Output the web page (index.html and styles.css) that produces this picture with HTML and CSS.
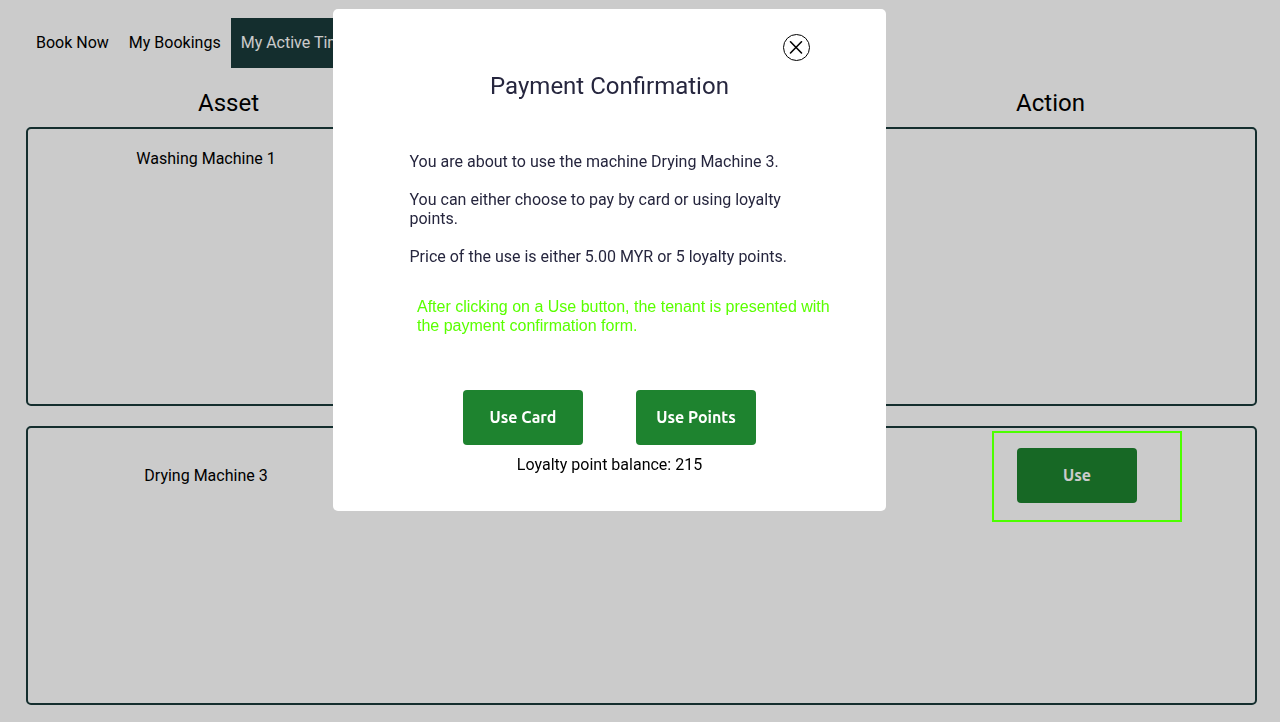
FILE: index.html
```html
<!DOCTYPE html>
<html lang="en">
<head>
  <meta charset="utf-8">
  <meta name="viewport" content="width=device-width, initial-scale=1">
  <title>Payment Confirmation</title>
  <link rel="stylesheet" href="styles.css">
</head>
<body>
  <div class="page">
    <nav class="tabs">
      <a class="tab" href="#book">Book Now</a>
      <a class="tab" href="#bookings">My Bookings</a>
      <a class="tab tab-active" href="#active">My Active Times</a>
    </nav>
    <div class="headings">
      <div>Asset</div>
      <div></div>
      <div>Action</div>
    </div>
    <main class="assets">
      <section class="asset">
        <div class="asset-name">Washing Machine 1</div>
      </section>
      <section class="asset">
        <div class="asset-name asset-name-tall">Drying Machine 3</div>
        <div></div>
        <div class="asset-action">
          <button class="button" type="button">Use</button>
          <span class="highlight"></span>
        </div>
      </section>
    </main>
  </div>

  <div class="overlay">
    <div class="modal" role="dialog" aria-modal="true" aria-labelledby="modal-title">
      <button class="close" type="button" aria-label="Close">
        <svg width="27" height="27" viewBox="0 0 27 27" fill="none" stroke="#000">
          <circle cx="13.5" cy="13.5" r="13"/>
          <path d="M7.5 7.8L18.5 19M18.5 7.8L7.5 19" stroke-width="1.6" stroke-linecap="round"/>
        </svg>
      </button>
      <h1 class="title" id="modal-title">Payment Confirmation</h1>
      <div class="message">
        <p>You are about to use the machine Drying Machine 3.</p>
        <p>You can either choose to pay by card or using loyalty points.</p>
        <p>Price of the use is either 5.00 MYR or 5 loyalty points.</p>
      </div>
      <p class="note">After clicking on a Use button, the tenant is presented with the payment confirmation form.</p>
      <div class="choices">
        <button class="button" type="button">Use Card</button>
        <button class="button" type="button">Use Points</button>
      </div>
      <p class="balance">Loyalty point balance: 215</p>
    </div>
  </div>
</body>
</html>
```

FILE: styles.css
```css
* {
  box-sizing: border-box;
}

body {
  margin: 0;
  background: #fff;
  color: #000;
  font: 16px/19px Roboto, sans-serif;
}

p,
h1 {
  margin: 0;
}

.page {
  display: flex;
  flex-direction: column;
  min-height: 100vh;
  padding: 18px 23px 17px 26px;
}

.tabs {
  display: flex;
}

.tab {
  padding: 0 10px;
  line-height: 50px;
  color: #000;
  text-decoration: none;
}

.tab-active {
  background: #1a3a3a;
  color: #fff;
}

.headings {
  display: grid;
  grid-template-columns: repeat(3, 1fr);
  margin: 21px 1px 10px -3px;
  font-size: 24px;
  line-height: 28px;
  text-align: center;
}

.assets {
  flex: 1;
  display: grid;
  grid-auto-rows: 1fr;
  gap: 20px;
}

.asset {
  display: grid;
  grid-template-columns: 356px 1fr 356px;
  align-items: start;
  padding-top: 20px;
  border: 2px solid #1a3a3a;
  border-radius: 5px;
}

.asset-name {
  text-align: center;
}

.asset-name-tall {
  line-height: 55px;
}

.asset-action {
  position: relative;
  display: flex;
  justify-content: center;
}

.highlight {
  position: absolute;
  top: -17px;
  left: 93px;
  z-index: 2;
  width: 190px;
  height: 91px;
  border: 2px solid #4cff00;
  pointer-events: none;
}

.button {
  width: 120px;
  height: 55px;
  padding: 0;
  border: 0;
  border-radius: 4px;
  background: #1e832f;
  color: #fff;
  font: 600 16px/19px Ubuntu, "Noto Sans", sans-serif;
  cursor: pointer;
}

.overlay {
  position: fixed;
  inset: 0;
  z-index: 1;
  display: flex;
  justify-content: center;
  align-items: flex-start;
  padding: 9px 61px 9px 0;
  background: rgba(0, 0, 0, 0.204);
}

.modal {
  display: flex;
  flex-direction: column;
  align-items: center;
  width: 553px;
  max-width: 100%;
  padding: 25px 0 37px;
  border-radius: 5px;
  background: #fff;
}

.close {
  align-self: flex-end;
  margin-right: 76px;
  padding: 0;
  border: 0;
  background: none;
  cursor: pointer;
}

.close svg {
  display: block;
}

.title {
  margin-top: 11px;
  color: #26263e;
  font-size: 24px;
  font-weight: 400;
  line-height: 28px;
}

.message {
  display: grid;
  gap: 19px;
  width: 400px;
  margin-top: 52px;
  color: #26263e;
}

.note {
  align-self: flex-end;
  width: 469px;
  margin-top: 31px;
  padding-right: 50px;
  color: #5aff00;
  font-family: "Liberation Sans", Arial, sans-serif;
}

.choices {
  display: flex;
  gap: 53px;
  margin-top: 55px;
}

.balance {
  margin-top: 10px;
}
```
